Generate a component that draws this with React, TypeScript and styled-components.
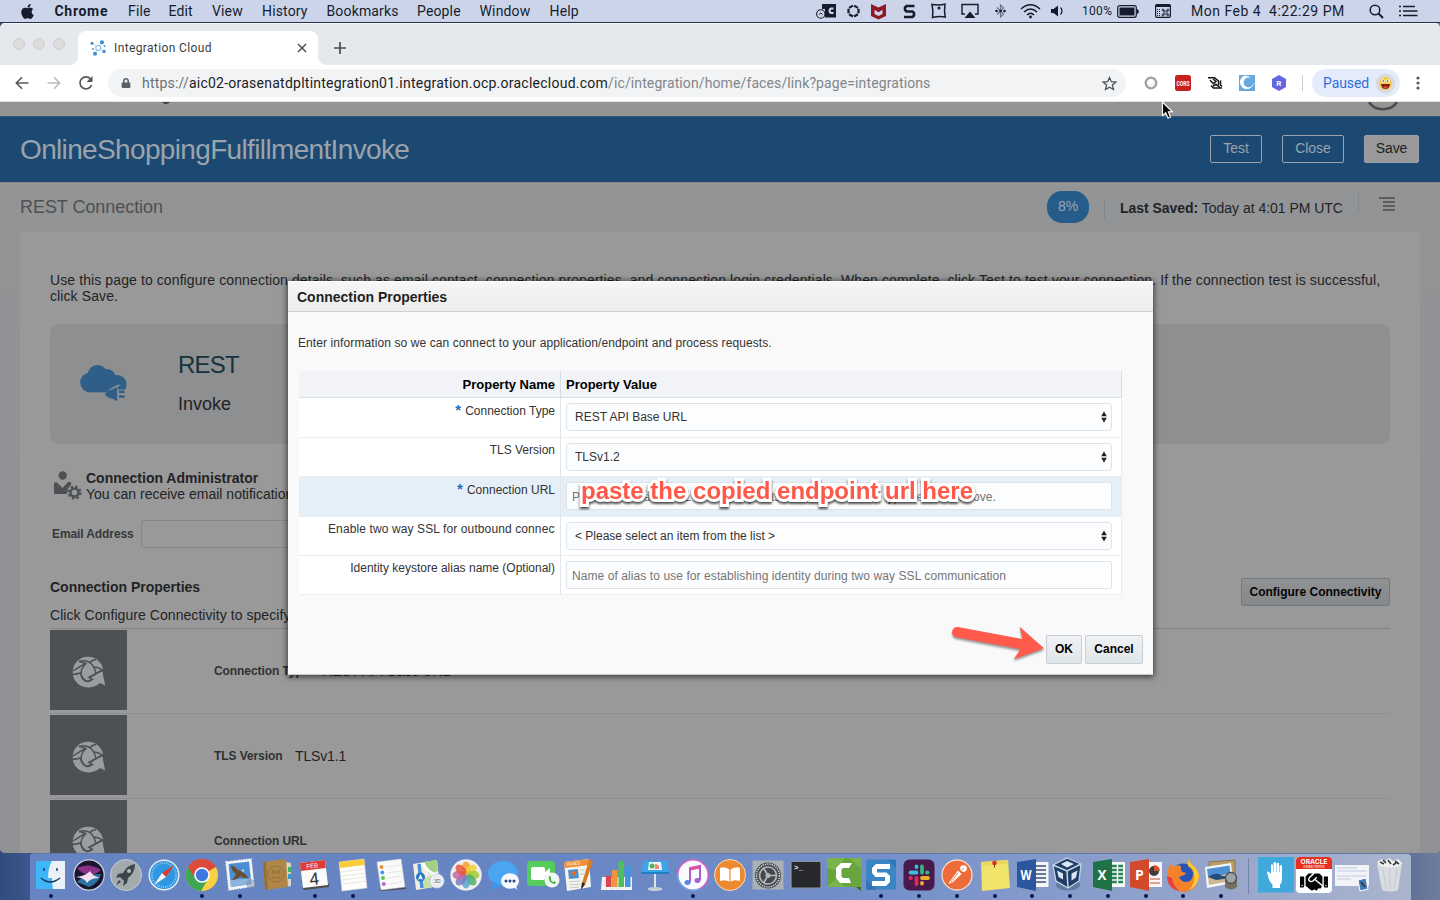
import React from "react";
import styled, { createGlobalStyle } from "styled-components";
import { FaApple, FaHandshake, FaLock } from "react-icons/fa";

const HELV = `"Liberation Sans", Arial, sans-serif`;
const SYS = `Roboto, "Liberation Sans", sans-serif`;

const GlobalStyle = createGlobalStyle`
  * { box-sizing: border-box; }
  html, body { margin: 0; padding: 0; overflow: hidden; }
  button, input { font: inherit; }
  svg { display: block; flex: none; }
`;

const Desktop = styled.div`
  width: 1440px;
  height: 900px;
  display: flex;
  flex-direction: column;
  overflow: hidden;
  position: relative;
  background: linear-gradient(90deg, #334b7c 0, #3f5b92 40px, #5b6d98 1400px, #707d9b 1440px);
  font-family: ${HELV};
`;

/* ---------- menu bar ---------- */

const MenuBar = styled.div`
  height: 23px;
  flex: none;
  display: flex;
  align-items: center;
  background: #cbd4e9;
  border-bottom: 1px solid #28314d;
  color: #161c2e;
  font-family: ${SYS};
  font-size: 14px;
  letter-spacing: 0.15px;
`;

const MenuItem = styled.span<{ $w: number; $bold?: boolean; $ls?: number }>`
  width: ${(p) => p.$w}px;
  flex: none;
  white-space: nowrap;
  font-weight: ${(p) => (p.$bold ? 700 : 400)};
  letter-spacing: ${(p) => p.$ls ?? 0.15}px;
`;

const StatusItem = styled.span<{ $gap: number; $w: number; $size?: number; $ls?: number }>`
  margin-left: ${(p) => p.$gap}px;
  width: ${(p) => p.$w}px;
  flex: none;
  white-space: pre;
  font-size: ${(p) => p.$size ?? 14}px;
  letter-spacing: ${(p) => p.$ls ?? 0.15}px;
`;

const AppleLogo = styled(FaApple)`
  margin-left: 19px;
`;

/* ---------- browser window ---------- */

const Window = styled.div`
  height: 830px;
  flex: none;
  display: flex;
  flex-direction: column;
  overflow: hidden;
  border-radius: 5px;
  background: #999;
`;

const TabStrip = styled.div`
  height: 42px;
  flex: none;
  display: flex;
  align-items: flex-end;
  background: #e5e9ed;
  border-top: 1px solid #f4f5f6;
`;

const Lights = styled.div`
  width: 70px;
  height: 41px;
  padding: 14px 0 0 13px;
  display: flex;
  gap: 8px;
`;

const Light = styled.i`
  width: 12px;
  height: 12px;
  border-radius: 50%;
  background: #dcdcdc;
  border: 1px solid #cfcfcf;
`;

const TabFoot = styled.i<{ $right?: boolean }>`
  width: 8px;
  height: 8px;
  background: radial-gradient(circle at ${(p) => (p.$right ? "100%" : "0")} 0, transparent 7.5px, #fff 8px);
`;

const Tab = styled.div`
  width: 240px;
  height: 34px;
  padding: 0 10px 0 12px;
  display: flex;
  align-items: center;
  background: #fff;
  border-radius: 8px 8px 0 0;
  font: 12px ${SYS};
  letter-spacing: 0.37px;
  color: #3c4043;
`;

const TabTitle = styled.span`
  margin-left: 8px;
  flex: 1;
`;

const NewTab = styled.div`
  margin: 0 0 11px 7px;
`;

const Toolbar = styled.div`
  height: 37px;
  flex: none;
  display: flex;
  align-items: center;
  background: #fff;
  border-bottom: 1px solid #e3e3e3;
  padding-left: 14px;
`;

const NavIcons = styled.div`
  width: 94px;
  display: flex;
  gap: 16px;
`;

const Omnibox = styled.div`
  width: 1018px;
  height: 28px;
  border-radius: 14px;
  background: #f1f3f4;
  display: flex;
  align-items: center;
  padding: 0 9px 0 13px;
  font: 14px ${SYS};
  letter-spacing: 0.11px;
  color: #80868b;
`;

const Url = styled.span`
  margin-left: 11px;
  flex: 1;
  white-space: nowrap;
`;

const Host = styled.span`
  color: #202124;
  letter-spacing: 0.245px;
`;

const Scheme = styled.span`
  color: #6b7075;
  letter-spacing: 0.19px;
`;

const Extensions = styled.div`
  width: 176px;
  padding-left: 17px;
  display: flex;
  align-items: center;
  gap: 16px;
`;

const Divider = styled.i<{ $h: number; $color: string }>`
  width: 1px;
  height: ${(p) => p.$h}px;
  flex: none;
  background: ${(p) => p.$color};
`;

const Profile = styled.div`
  margin-left: 9px;
  width: 88px;
  height: 28px;
  flex: none;
  border-radius: 14px;
  background: #e4ecfb;
  color: #2f6fdc;
  font: 14px ${SYS};
  letter-spacing: -0.1px;
  display: flex;
  align-items: center;
  justify-content: space-between;
  padding: 0 4px 0 11px;
`;

const KebabSlot = styled.div`
  margin-left: 16px;
`;

/* ---------- page content ---------- */

const Page = styled.main`
  flex: 1;
  display: flex;
  flex-direction: column;
  background: linear-gradient(#939495 80px, #8f9195 400px);
  color: #222325;
`;

const TopStrip = styled.div`
  height: 14px;
  flex: none;
  background: #949494;
  display: flex;
  justify-content: space-between;
  padding: 0 41px 0 160px;
`;

const TitleBar = styled.header`
  height: 66px;
  flex: none;
  display: flex;
  align-items: center;
  gap: 20px;
  padding: 0 21px 0 20px;
  background: #1c4972;
  border-top: 1px solid #315a80;
`;

const Title = styled.h1`
  flex: 1;
  margin: 0;
  font-weight: 400;
  font-size: 28px;
  letter-spacing: -0.65px;
  color: #9ba3aa;
`;

const HeaderButton = styled.button<{ $w: number; $filled?: boolean }>`
  width: ${(p) => p.$w}px;
  height: 28px;
  margin-top: -2px;
  padding: 0 0 2px;
  border-radius: 2px;
  border: 1px solid #98a3ad;
  background: ${(p) => (p.$filled ? "#999" : "transparent")};
  color: ${(p) => (p.$filled ? "#222" : "#9aa5ae")};
  font-size: 14px;
  letter-spacing: -0.05px;
`;

const SubHeader = styled.div`
  height: 50px;
  flex: none;
  display: flex;
  padding: 0 45px 0 20px;
  border-top: 1px solid #87898b;
`;

const SubTitle = styled.h2`
  flex: 1;
  margin: 14px 0 0;
  font-weight: 400;
  font-size: 18px;
  line-height: 20px;
  letter-spacing: -0.05px;
  color: #4f5050;
`;

const Percent = styled.span`
  width: 42px;
  height: 32px;
  margin: 8px 15px 0 0;
  border-radius: 15px;
  background: #265c8a;
  color: #98a6b1;
  font-size: 14px;
  line-height: 31px;
  text-align: center;
`;

const Saved = styled.span`
  margin: 16px 15px 0 15px;
  width: 223px;
  font-size: 14px;
  line-height: 18px;
  white-space: nowrap;
  letter-spacing: -0.03px;
`;

const DividerDrop = styled.div<{ $top: number }>`
  padding-top: ${(p) => p.$top}px;
`;

const ListIcon = styled.div`
  margin: 14px 0 0 20px;
  width: 16px;
  height: 15px;
  display: flex;
  flex-direction: column;
  align-items: flex-end;
  gap: 2px;
`;

const ListLine = styled.i<{ $w: number }>`
  width: ${(p) => p.$w}px;
  height: 2px;
  background: #5c5d5e;
`;

const Card = styled.section`
  flex: 1;
  margin: 0 20px;
  padding: 40px 30px 0;
  background: #999;
  overflow: hidden;
`;

const Intro = styled.p`
  margin: 0;
  font-size: 14px;
  line-height: 16px;
  letter-spacing: 0.1px;
`;

const Connector = styled.div`
  margin-top: 20px;
  height: 120px;
  border-radius: 9px;
  background: #8d8f91;
  display: flex;
  padding: 28px 0 0 29px;
`;

const CloudSlot = styled.div`
  padding-top: 12px;
`;

const ConnectorText = styled.div`
  margin-left: 51px;
`;

const ConnectorName = styled.div`
  font-size: 24px;
  line-height: 26px;
  letter-spacing: -0.8px;
  color: #16323c;
`;

const ConnectorRole = styled.div`
  margin-top: 15px;
  font-size: 18px;
  line-height: 22px;
`;

const Admin = styled.div`
  margin-top: 26px;
  display: flex;
  gap: 4px;
  padding-left: 4px;
  font-size: 14px;
  line-height: 16px;
`;

const EmailRow = styled.label`
  margin-top: 18px;
  display: flex;
  align-items: center;
  gap: 7px;
  padding-left: 2px;
  font-size: 12px;
  font-weight: 700;
  letter-spacing: -0.1px;
  color: #37383a;
`;

const EmailInput = styled.input`
  width: 300px;
  height: 28px;
  border: 1px solid #84888c;
  border-radius: 2px;
  background: #999;
`;

const SectionHead = styled.div`
  margin-top: 30px;
  height: 51px;
  display: flex;
  justify-content: space-between;
  border-bottom: 1px solid #7f8487;
`;

const SectionTitle = styled.h3`
  margin: 0 0 10px;
  font-size: 14px;
  line-height: 18px;
`;

const SectionHint = styled.div`
  font-size: 14px;
  line-height: 18px;
  letter-spacing: 0.06px;
`;

const PushButton = styled.button<{ $w: number; $dim?: boolean }>`
  width: ${(p) => p.$w}px;
  height: ${(p) => (p.$dim ? 28 : 29)}px;
  padding: 0 0 1px;
  font-size: 12px;
  font-weight: 700;
  letter-spacing: 0;
  color: ${(p) => (p.$dim ? "#050505" : "#000")};
  border: 1px solid ${(p) => (p.$dim ? "#74797d" : "#c4ced7")};
  border-radius: 2px;
  background: ${(p) => (p.$dim ? "linear-gradient(#8f9193, #86898b)" : "linear-gradient(#f0f2f4, #e0e5e9)")};
`;

const PropRow = styled.div`
  height: 85px;
  display: flex;
  align-items: center;
  border-bottom: 1px solid #8e8f90;
`;

const PropTile = styled.div`
  width: 77px;
  height: 80px;
  margin-bottom: 2px;
  padding: 5px 0 0 1px;
  background: #4d5156;
  display: flex;
  align-items: center;
  justify-content: center;
`;

const PropLabel = styled.b`
  margin-left: 87px;
  font-size: 12px;
  letter-spacing: -0.08px;
  color: #303133;
`;

const PropValue = styled.span<{ $gap: number }>`
  margin-left: ${(p) => p.$gap}px;
  font-size: 14px;
  letter-spacing: -0.15px;
`;

/* ---------- dialog ---------- */

const Dialog = styled.div`
  position: absolute;
  left: 288px;
  top: 281px;
  width: 865px;
  height: 394px;
  display: flex;
  flex-direction: column;
  background: #f9f9f9;
  border-bottom: 1px solid #c0cbd4;
  box-shadow: 0 1px 6px 1px rgba(0, 0, 0, 0.6);
  color: #333;
  font-size: 12px;
`;

const DialogTitle = styled.div`
  height: 31px;
  flex: none;
  padding: 0 9px 0 9px;
  font-weight: 700;
  font-size: 14px;
  line-height: 30px;
  color: #1f1f1f;
  background: linear-gradient(#f6f6f6, #ededed);
  border-top: 1px solid #fff;
  border-bottom: 1px solid #c9d3da;
`;

const DialogText = styled.p`
  margin: 23px 0 0 10px;
  line-height: 16px;
  letter-spacing: 0.095px;
`;

const Table = styled.div`
  width: 823px;
  margin: 20px 0 0 11px;
  display: flex;
  flex-direction: column;
`;

const HeadRow = styled.div`
  height: 27px;
  display: grid;
  grid-template-columns: 262px 1fr;
  background: #f2f3f7;
  border-bottom: 1px solid #d6dfe6;
  border-right: 1px solid #d6dfe6;
  font-weight: 700;
  font-size: 13px;
  line-height: 27px;
  color: #000;
`;

const HeadName = styled.div`
  text-align: right;
  padding-right: 5px;
  border-right: 1px solid #d6dfe6;
`;

const HeadValue = styled.div`
  padding-left: 5px;
`;

const Row = styled.div<{ $h: number; $selected?: boolean }>`
  height: ${(p) => p.$h}px;
  display: grid;
  grid-template-columns: 262px 1fr;
  background: ${(p) => (p.$selected ? "#e5eff8" : "#fff")};
  border-bottom: 1px solid #ebeef0;
  border-right: 1px solid #e8ecef;
`;

const NameCell = styled.div<{ $top?: number }>`
  padding: ${(p) => p.$top ?? 4}px 5px 0 29px;
  text-align: right;
  line-height: 16px;
  white-space: nowrap;
  border-right: 1px solid #e2e7eb;
`;

const Clip = styled.div`
  width: 227px;
  overflow: hidden;
  text-align: left;
  letter-spacing: 0.11px;
`;

const Star = styled.b`
  color: #2a6cc4;
  font-size: 15px;
  line-height: 10px;
  margin-right: 4px;
`;

const ValueCell = styled.div`
  padding: 5px 0 0 5px;
`;

const SelectBox = styled.div`
  width: 546px;
  height: 28px;
  border: 1px solid #dde3e8;
  border-radius: 4px;
  background: #fcfdfe;
  display: flex;
  align-items: center;
  justify-content: space-between;
  padding: 0 3px 0 8px;
`;

const TextInput = styled.input`
  display: block;
  width: 546px;
  height: 28px;
  border: 1px solid #dde3e8;
  border-radius: 2px;
  background: #fcfdfe;
  padding: 1px 5px 0;
  letter-spacing: 0.08px;
  &::placeholder { color: #757575; opacity: 1; }
`;

const DialogActions = styled.div`
  margin: 40px 10px 0 0;
  display: flex;
  justify-content: flex-end;
  gap: 3px;
`;

const Note = styled.div`
  position: absolute;
  left: 581px;
  top: 477px;
  font-size: 24px;
  line-height: 28px;
  font-weight: 700;
  white-space: nowrap;
  color: #ff5848;
  -webkit-text-stroke: 6px #fff;
  paint-order: stroke fill;
  filter: drop-shadow(0 2px 1px rgba(0, 0, 0, 0.7));
`;

const ArrowMark = styled.svg`
  position: absolute;
  left: 946px;
  top: 620px;
  filter: drop-shadow(0 2px 1px rgba(0, 0, 0, 0.4));
`;

const Pointer = styled.svg`
  position: absolute;
  left: 1160px;
  top: 100px;
`;

/* ---------- dock ---------- */

const DockBar = styled.div`
  margin-left: 30px;
  width: 1381px;
  height: 47px;
  flex: none;
  display: flex;
  padding: 2px 0 0 2px;
  border-radius: 4px 4px 0 0;
  background: linear-gradient(90deg, #6684c2 0, #6785c3 500px, #7490ca 850px, #98a6cb 1200px, #aab4ce 100%);
  border-top: 1px solid #6279a8;
`;

const DockSlot = styled.div`
  width: 37.75px;
  flex: none;
  display: flex;
  flex-direction: column;
  align-items: center;
`;

const RunDot = styled.i`
  width: 4px;
  height: 4px;
  border-radius: 50%;
  background: #0a1750;
`;

const DockSeparator = styled.div`
  width: 17.5px;
  display: flex;
  justify-content: center;
  padding-top: 2px;
`;

/* ---------- icon drawings ---------- */

const INK = "#161c2e";

const Globe = () => (
  <svg width="34" height="34" viewBox="0 0 34 34">
    <circle cx="16" cy="16" r="15.3" fill="#9a9c9f" />
    <g fill="none" stroke="#4d5156" strokeWidth="1.5">
      <path d="M7 5.500Q13 3.500 18 6.500Q20 4 24 3.500" />
      <path d="M14 7.500Q9 12 9 18Q10 23 15 25.500Q20 24 22 20" />
      <path d="M18 6.500Q23 11 24 18" />
      <path d="M1 15Q7 11 13.500 7.500Q10 6 7 5.500" />
      <path d="M22 11Q26 11 30.500 14L17 21.500" />
    </g>
    <path d="M0 18.500Q5 18 8.500 17Q10 25 16 25.500Q19 25 21 23L17 21.500L31 14L33 29.500L28 27" fill="none" stroke="#4d5156" strokeWidth="1.500" />
    <path d="M30.300 15.500L33.200 29.500L28 27Q22 32 15 31.300Q4 30 1 20L6.500 19Q9 26.500 15.500 27Q20 27 23 24L19 21.700Z" fill="#9a9c9f" />
  </svg>
);

const CloudPlug = () => (
  <svg width="48" height="38" viewBox="0 0 48 38">
    <g fill="#2f5f89">
      <circle cx="11" cy="18.500" r="9.800" />
      <circle cx="18.500" cy="11" r="10" />
      <circle cx="28" cy="14" r="9" />
      <circle cx="38.500" cy="20" r="9" />
      <rect x="11" y="14" width="27" height="14.300" />
    </g>
    <path d="M24 31L31 25L39 20.500L50 25V38H24Z" fill="#8d8f91" />
    <path d="M39 22H47.300Q47 26 44 28H39Z" fill="#2f5f89" />
    <path d="M26 30.300Q27 27 33 25.500L38.200 23V37.300L33 34.500Q28 34 26 30.300Z" fill="#2f5f89" />
    <path d="M38.500 27.700H48M38.500 32.500H48" stroke="#8d8f91" strokeWidth="4.200" />
    <path d="M40 27.700H45.500M40 32.500H45.500" stroke="#2f5f89" strokeWidth="2.600" />
  </svg>
);

const AdminIcon = () => (
  <svg width="28" height="30" viewBox="0 0 28 30">
    <circle cx="8.700" cy="5.500" r="4.200" fill="#4d5156" />
    <path d="M0 24V14Q0 12 2.500 12L8.500 18L14 12H17V15Q13 18 13 24Z" fill="#4d5156" />
    <circle cx="20.500" cy="22.500" r="4" fill="none" stroke="#4d5156" strokeWidth="2.500" />
    <circle cx="20.500" cy="22.500" r="5.800" fill="none" stroke="#4d5156" strokeWidth="2.600" strokeDasharray="2.300 2.255" />
  </svg>
);

const Updown = () => (
  <svg width="8" height="12" viewBox="0 0 8 12">
    <path d="M1.200 5.200L4 0.500L6.800 5.200ZM1.200 6.800L4 11.500L6.800 6.800Z" fill="#222" />
  </svg>
);

const statusIcons: { x: number; w: number; node: React.ReactNode }[] = [
  {
    x: 816, w: 21,
    node: (
      <svg width="21" height="18" viewBox="0 0 21 18">
        <path d="M6 2H20V15.500H9V7H6Z" fill={INK} />
        <path d="M17.500 6.500H15A2.500 2.500 0 0 0 15 11H17.500" fill="none" stroke="#cbd4e9" strokeWidth="2.200" />
        <circle cx="4.800" cy="12" r="4.200" fill="#cbd4e9" stroke={INK} strokeWidth="1.100" />
        <path d="M3 12.500L4.800 11L6.600 12.500" stroke={INK} fill="none" />
      </svg>
    ),
  },
  {
    x: 846, w: 15,
    node: (
      <svg width="15" height="16" viewBox="0 0 15 16">
        <path d="M7.500 2.300L12.500 5.200V10.900L7.500 13.800L2.500 10.900V5.200Z" fill="none" stroke={INK} strokeWidth="2.200" strokeDasharray="4.400 1.350" strokeDashoffset="-0.700" />
      </svg>
    ),
  },
  {
    x: 871, w: 15,
    node: (
      <svg width="15" height="17" viewBox="0 0 15 17">
        <path d="M0 1L7.500 4.500L15 1V13L7.500 16.500L0 13Z" fill="#8e1826" />
        <path d="M3.500 6.500L7.500 9L11.500 6.500V11L7.500 13L3.500 11Z" fill="#cbd4e9" />
        <path d="M3.500 5.500L7.500 8L11.500 5.500" stroke="#8e1826" strokeWidth="2" fill="none" />
      </svg>
    ),
  },
  {
    x: 903, w: 13,
    node: (
      <svg width="13" height="15" viewBox="0 0 13 15">
        <path d="M11.500 2H3.500L2 3.500V6L3.500 7.500H9.500L11 9V11.500L9.500 13H1" fill="none" stroke={INK} strokeWidth="2.600" />
      </svg>
    ),
  },
  {
    x: 931, w: 16,
    node: (
      <svg width="16" height="16" viewBox="0 0 16 16">
        <path d="M1 1.500Q8 2.500 14 1.200Q13 8 14.200 14Q8 13 1.500 14.500Q2.500 8 1 1.500Z" fill="none" stroke={INK} strokeWidth="1.500" />
        <circle cx="8" cy="5" r="1.500" fill={INK} />
      </svg>
    ),
  },
  {
    x: 961, w: 18,
    node: (
      <svg width="18" height="16" viewBox="0 0 18 16">
        <path d="M4 11H1V1.500H17V11H14" fill="none" stroke={INK} strokeWidth="1.400" />
        <path d="M3.500 15L9 8.500L14.500 15Z" fill={INK} />
      </svg>
    ),
  },
  {
    x: 994, w: 13,
    node: (
      <svg width="13" height="16" viewBox="0 0 13 16">
        <path d="M3 4.500L9.500 11L6.500 14V2L9.500 5L3 11.500" fill="none" stroke="#6c7489" strokeWidth="1.200" />
        <circle cx="2.500" cy="8" r="1.300" fill={INK} />
        <circle cx="6.500" cy="8" r="1.300" fill={INK} />
        <circle cx="10.500" cy="8" r="1.300" fill={INK} />
      </svg>
    ),
  },
  {
    x: 1020, w: 21,
    node: (
      <svg width="21" height="16" viewBox="0 0 21 16">
        <g fill="none" stroke={INK} strokeWidth="1.500">
          <path d="M1 6Q10.500 -2.500 20 6" />
          <path d="M4 9Q10.500 3 17 9" />
          <path d="M7 12Q10.500 8.500 14 12" />
        </g>
        <circle cx="10.500" cy="14" r="1.400" fill={INK} />
      </svg>
    ),
  },
  {
    x: 1050, w: 14,
    node: (
      <svg width="14" height="14" viewBox="0 0 14 14">
        <path d="M1 5H3.500L8 1.500V12.500L3.500 9H1Z" fill={INK} />
        <path d="M10.500 3.500Q13.500 7 10.500 10.500" fill="none" stroke={INK} strokeWidth="1.200" />
      </svg>
    ),
  },
];

const BatteryIcon = () => (
  <svg width="23" height="13" viewBox="0 0 23 13">
    <rect x="0.700" y="0.700" width="18.600" height="11.600" rx="2" fill="none" stroke={INK} strokeWidth="1.200" />
    <rect x="2.500" y="2.500" width="15" height="8" fill={INK} />
    <path d="M20.500 4.500Q22.500 6.500 20.500 8.500Z" fill={INK} stroke={INK} />
  </svg>
);

const KeyboardIcon = () => (
  <svg width="16" height="14" viewBox="0 0 16 14">
    <rect x="0.600" y="0.600" width="14.800" height="12.800" rx="1.200" fill="none" stroke={INK} strokeWidth="1.200" />
    <path d="M1 2H15" stroke={INK} strokeWidth="2" />
    <path d="M2.500 5V12M4.500 5V12" stroke={INK} strokeDasharray="1 1" />
    <g fill="none" stroke={INK} strokeWidth="0.900">
      <rect x="9" y="7" width="3" height="3" />
      <circle cx="8" cy="6" r="1" /><circle cx="13" cy="6" r="1" />
      <circle cx="8" cy="11" r="1" /><circle cx="13" cy="11" r="1" />
    </g>
  </svg>
);

const SpotlightIcon = () => (
  <svg width="15" height="15" viewBox="0 0 15 15">
    <circle cx="6" cy="6" r="4.800" fill="none" stroke={INK} strokeWidth="1.500" />
    <path d="M9.500 9.500L14 14" stroke={INK} strokeWidth="1.900" />
  </svg>
);

const MenuListIcon = () => (
  <svg width="19" height="12" viewBox="0 0 19 12">
    <path d="M0 1.500H2M0 6H2M0 10.500H2" stroke={INK} strokeWidth="1.700" />
    <path d="M4 1.500H16M4 6H18.500M4 10.500H18.500" stroke={INK} strokeWidth="1.700" />
  </svg>
);

const Favicon = () => (
  <svg width="16" height="16" viewBox="0 0 16 16">
    <path d="M2 3L8 8L12 2M8 8L5 14M8 8L14 11" fill="none" stroke="#9cc6e8" strokeWidth="0.800" />
    <circle cx="8.300" cy="8" r="2.600" fill="#fff" stroke="#72b0e0" />
    <g fill="#3b8fd2">
      <circle cx="2" cy="3.200" r="1.500" /><circle cx="12" cy="2.300" r="2" />
      <circle cx="5" cy="13.800" r="2" /><circle cx="14" cy="11.500" r="1.700" />
      <circle cx="14.500" cy="6" r="0.900" /><circle cx="3" cy="9" r="0.900" />
    </g>
  </svg>
);

/* Every dock drawing is made on a 38 x 38 grid. */
const D = ({ children }: { children: React.ReactNode }) => (
  <svg width="38" height="38" viewBox="0 0 38 38">{children}</svg>
);

const petals = ["#f6a02d", "#f3d02f", "#a6c83c", "#4fae66", "#5ba7c9", "#7d7bc0", "#c267a4", "#e8573f"];

const dockApps: { run?: boolean; art: React.ReactNode }[] = [
  { art: (<>
    <rect x="4" y="5" width="29" height="28" rx="1.500" fill="#3fb6f7" />
    <path d="M20 5H33V33H21Q20 28 20 22H16Q16 12 20 5Z" fill="#eaf1f8" />
    <path d="M12 12V15M25 12V15" stroke="#16335a" strokeWidth="1.400" />
    <path d="M9 22Q18 30 28 22" fill="none" stroke="#16335a" strokeWidth="1.400" />
  </>), run: true },
  { art: (<>
    <circle cx="19" cy="19" r="15.200" fill="#1b1630" stroke="#cfd4e4" strokeWidth="1.200" />
    <path d="M7 12Q19 6 31 14Q24 20 19 19Q12 18 7 12Z" fill="#a63a9c" opacity=".8" />
    <path d="M7 26Q15 18 31 18Q28 28 19 31Z" fill="#2c7fae" opacity=".9" />
    <path d="M6 21Q16 20 20 15Q22 20 30 22Q20 22 17 27Q15 22 6 21Z" fill="#f2dff4" />
  </>) },
  { art: (<>
    <circle cx="19" cy="19" r="15.500" fill="#a3abaf" stroke="#c3cbd2" />
    <path d="M28 8Q20 9 16 17L11 18L9 22L13 21L17 25L16 30L20 27L21 22Q28 17 28 8Z" fill="#3f464b" />
    <circle cx="22" cy="15" r="2" fill="#b6bdc1" />
    <path d="M12 24L9 29L14 26Z" fill="#3f464b" />
  </>) },
  { art: (<>
    <circle cx="19" cy="19" r="15.500" fill="#e6ebf0" />
    <circle cx="19" cy="19" r="14" fill="#2f97e0" />
    <circle cx="19" cy="19" r="12" fill="none" stroke="#a6d5f5" strokeWidth="2" strokeDasharray=".7 1.400" />
    <path d="M29 9L21 21L17 17Z" fill="#e5382d" /><path d="M9 29L17 17L21 21Z" fill="#f4f4f4" />
  </>) },
  { run: true, art: (<>
    <circle cx="19" cy="19" r="16" fill="#f9d043" />
    <path d="M19 19L5.100 11A16 16 0 0 1 32.900 11Z" fill="#dd4b3c" />
    <path d="M19 19L5.100 11A16 16 0 0 0 18 35L25.500 22Z" fill="#3fa654" />
    <path d="M19 11H32.900A16 16 0 0 0 5.100 11L12 22Z" fill="#dd4b3c" />
    <circle cx="19" cy="19" r="7.800" fill="#fff" /><circle cx="19" cy="19" r="6.200" fill="#3c79e0" />
  </>) },
  { run: true, art: (<>
    <path d="M5 6L30 3L33 30L8 34Z" fill="#f5f6f7" stroke="#f5f6f7" strokeWidth="1.500" strokeDasharray="1.500 1" />
    <path d="M7.500 8L28 5.500L30.500 28L10 31Z" fill="#4c8ed3" />
    <path d="M9 24L30 22L30.500 28L10 31Z" fill="#8fb4dc" />
    <path d="M10 9Q15 11 17 14Q20 14 21 16Q25 18 28 23Q24 21 22 22L20 20Q15 24 11 24Q14 21 15 18Q10 15 10 9Z" fill="#6b4d30" />
    <path d="M20 14L23 13.500L22.500 16Z" fill="#f3efe6" />
    <circle cx="30" cy="28" r="5" fill="#6f87a5" opacity=".45" />
  </>) },
  { art: (<>
    <path d="M28 6L33 7V30L28 31Z" fill="#d8d5c4" /><path d="M30 11H33V16H30Z" fill="#39b56a" /><path d="M30 18H33V23H30Z" fill="#3b98d1" />
    <path d="M5 6L28 3L30 31L7 34Z" fill="#b18747" /><path d="M5 6L8 5.600L10 33.500L7 34Z" fill="#94703a" />
    <circle cx="18" cy="18" r="8" fill="none" stroke="#94703a" />
    <circle cx="15.500" cy="16" r="2.300" fill="#9c773c" /><circle cx="20.500" cy="16" r="2.300" fill="#9c773c" />
    <path d="M12 22.500Q15 18 18 22Q21 18 24 22.500Z" fill="#9c773c" />
  </>) },
  { run: true, art: (<>
    <path d="M6 31L33 28V31L8 34Z" fill="#4e4e4a" />
    <path d="M4 7L29 4L32 29L7 32Z" fill="#fbfbfb" /><path d="M4 7L29 4L29.800 12L4.800 15Z" fill="#e03c36" />
    <text x="10.500" y="12.500" fontSize="6" fill="#fff" fontFamily="Liberation Sans, sans-serif" transform="rotate(-6 10 12)">FEB</text>
    <text x="14" y="29" fontSize="17" fill="#333" fontFamily="Roboto, sans-serif" transform="rotate(-6 16 28)">4</text>
  </>) },
  { run: true, art: (<>
    <path d="M5 6L30 3L33 32L8 35Z" fill="#fdfdf9" stroke="#d8d8d8" strokeWidth=".5" /><path d="M5 6L30 3L30.700 9L5.700 12Z" fill="#f9ce3a" />
    <path d="M7 16L31 13M7.500 20L31.500 17M8 24L32 21M8.500 28L32.500 25" stroke="#dcdcdc" strokeWidth=".7" />
  </>) },
  { art: (<>
    <path d="M7 33L33 30L34 33L9 35Z" fill="#494b50" />
    <path d="M5 6L29 3L33 31L9 34Z" fill="#fafafa" stroke="#cfcfcf" strokeWidth=".5" />
    <circle cx="9.500" cy="11" r="2" fill="#f08a35" /><circle cx="10.300" cy="16.500" r="2" fill="#4a9be8" />
    <circle cx="11" cy="22" r="2" fill="#5fc34d" /><circle cx="11.800" cy="28" r="2" fill="#b36bd0" />
    <path d="M14 11L28 9M15 17L29 15M16 22L30 20M16 28L30 26" stroke="#ddd" strokeWidth=".7" />
  </>) },
  { art: (<>
    <path d="M4 8L28 4L31 30L7 34Z" fill="#f3efe0" />
    <path d="M14 6L28 4L29 15L20 18Z" fill="#a5d083" /><path d="M15 22L22 19L24 31L14 32.500Z" fill="#c5dfa8" />
    <path d="M14 7Q18 17 30 20" stroke="#fff" strokeWidth="3" fill="none" />
    <path d="M10 8L13 32" stroke="#4a8fd8" strokeWidth="3.500" />
    <circle cx="11.500" cy="21" r="4.500" fill="#2979cc" /><path d="M11.500 18L14 24L11.500 22.500L9 24Z" fill="#fff" />
    <circle cx="28" cy="25" r="7" fill="#f5f6f7" stroke="#c6ccd6" /><circle cx="28" cy="25" r="4.500" fill="none" stroke="#c6ccd6" strokeWidth=".6" />
    <text x="25" y="27.200" fontSize="5" fill="#555" fontFamily="Liberation Sans, sans-serif">3D</text>
  </>) },
  { art: (<>
    <circle cx="19" cy="19" r="15.700" fill="#efefed" />
    {petals.map((c, i) => (
      <ellipse key={c} cx="19" cy="12" rx="4.300" ry="6.500" fill={c} opacity=".85" transform={`rotate(${i * 45} 19 19)`} />
    ))}
  </>) },
  { art: (<>
    <ellipse cx="18" cy="17.500" rx="15" ry="12.500" fill="#4ba5f3" /><path d="M8 25Q9 31 5 33Q12 33 16 29Z" fill="#3c96ee" />
    <ellipse cx="25" cy="25" rx="9" ry="7.700" fill="#f6f9fd" /><path d="M29 31L32 34L31 28Z" fill="#f6f9fd" />
    <circle cx="21" cy="25" r="1.500" fill="#23498a" /><circle cx="25" cy="25" r="1.500" fill="#23498a" /><circle cx="29" cy="25" r="1.500" fill="#23498a" />
  </>) },
  { art: (<>
    <rect x="4" y="5" width="28" height="25" rx="4" fill="#56cd5b" />
    <rect x="8" y="11" width="14" height="13" rx="2" fill="#fff" /><path d="M22 16L27 12V23L22 20Z" fill="#fff" />
    <circle cx="29" cy="24" r="7.500" fill="#f5f7f6" />
    <path d="M26 20Q25 24 28 26.500Q31 29 33 27L31.500 25L30 26Q27.500 24.500 28 22.500L27.500 20Z" fill="#41bc4b" />
  </>) },
  { art: (<>
    <path d="M4 6L29 3L31 31L7 35Z" fill="#f6f4ef" /><path d="M4 6L29 3L29.600 9L4.600 12Z" fill="#ef9038" />
    <text x="7" y="9.800" fontSize="4" fill="#fff" fontFamily="Liberation Sans, sans-serif" transform="rotate(-7 7 10)">PAGES</text>
    <path d="M8 14L18 13L19 22L9 23Z" fill="#4893d0" /><path d="M10 16L17 15L14.500 20.500Z" fill="#e56b2c" />
    <path d="M9 26L20 25M9.500 29L20 28M10 32L19 31M20 14H25M20 18H24" stroke="#b8b8b8" strokeWidth=".8" />
    <path d="M29 4L33 5L25 29L21 33L22 27Z" fill="#d57d26" /><path d="M22 26L25 28L21 34Z" fill="#302a26" />
  </>) },
  { art: (<>
    <path d="M4 21H34V34H3Z" fill="#f4f4f6" /><path d="M4 25H34M4 29H34M8 21V34M14 21V34M20 21V34" stroke="#cfcfd6" strokeWidth=".5" />
    <rect x="8" y="20" width="5.500" height="11" fill="#dd4250" /><rect x="14" y="14" width="5.500" height="17" fill="#f0953a" />
    <rect x="20.500" y="5" width="5.500" height="26" fill="#4fbf5d" /><rect x="27" y="10" width="5.500" height="21" fill="#3f96e0" />
  </>) },
  { art: (<>
    <path d="M8 5H31L33 16H5Z" fill="#3aa5e8" /><path d="M5 16H33V18H5Z" fill="#1f7fc5" />
    <path d="M13 6H25L26 14H12Z" fill="#f1f5f8" /><circle cx="16" cy="10" r="2.500" fill="#5bb05a" /><path d="M20 13V8M22 13V9" stroke="#e55642" strokeWidth="1.300" />
    <path d="M18 18H20V31H18Z" fill="#dfe5ec" /><ellipse cx="19" cy="33" rx="7.500" ry="2" fill="#c5cdd8" />
  </>) },
  { run: true, art: (<>
    <circle cx="19" cy="19" r="15.200" fill="#fafafc" stroke="#d661c8" strokeWidth="1.400" />
    <path d="M3.800 19A15.200 15.200 0 0 0 25 33" fill="none" stroke="#5cb3ef" strokeWidth="1.400" />
    <path d="M16 26V12L26 10V24" fill="none" stroke="#a65fd8" strokeWidth="2" /><path d="M16 13L26 11" stroke="#e0529a" strokeWidth="3" />
    <ellipse cx="13.500" cy="26.500" rx="3" ry="2.500" fill="#5b83e5" /><ellipse cx="23.500" cy="24.500" rx="3" ry="2.500" fill="#a65fd8" />
  </>) },
  { art: (<>
    <circle cx="19" cy="19" r="15.500" fill="#ee8a2e" stroke="#f6ddc0" />
    <path d="M19 14Q14 10 9 12V25Q15 23 19 26Q23 23 29 25V12Q24 10 19 14Z" fill="#fff" /><path d="M19 14V26" stroke="#ee8a2e" strokeWidth="1.200" />
  </>) },
  { art: (<>
    <rect x="3.500" y="4.500" width="31" height="29" fill="#a9b0b6" />
    <circle cx="19" cy="19.500" r="13" fill="#43484c" /><circle cx="19" cy="19.500" r="11.500" fill="none" stroke="#d6d9dc" strokeWidth="1.500" strokeDasharray="1.300 1" />
    <circle cx="19" cy="19.500" r="8.500" fill="none" stroke="#b3b7ba" strokeWidth="1.700" />
    <path d="M19 19.500H28M19 19.500L14.500 12M19 19.500L14.500 27" stroke="#b3b7ba" strokeWidth="1.700" /><circle cx="19" cy="19.500" r="2.500" fill="#b3b7ba" />
  </>) },
  { art: (<>
    <rect x="4" y="5.500" width="30" height="26.500" rx="1" fill="#27282b" stroke="#8f949c" strokeWidth="1.200" />
    <text x="7" y="14" fontSize="7.500" fontWeight="700" fill="#f0f0f0" fontFamily="Liberation Mono, monospace">&gt;_</text>
  </>) },
  { art: (<>
    <path d="M2 2H36V35L31 31H2Z" fill="#3a6d22" /><rect x="2" y="2" width="34" height="29" fill="#69a53e" />
    <path d="M2 2H20L10 14L2 12ZM24 2L36 12V2ZM2 31L12 22L20 31Z" fill="#8cc35a" opacity=".5" />
    <path d="M27 7H16L11 12V22L15 27H26L24 22H18L16.500 20.500V13.500L18 12H24Z" fill="#fff" />
  </>) },
  { run: true, art: (<>
    <rect x="4" y="3.500" width="30" height="30" rx="2" fill="#3a86c5" /><path d="M4 24L15 34H4ZM26 4L34 12V4Z" fill="#2a6ca8" opacity=".6" />
    <path d="M28 8H14L10 12V17L13.500 21H23V25H10V30H24L28 26V20L24.500 16.500H15V13H28Z" fill="#fff" />
  </>) },
  { run: true, art: (<>
    <rect x="3.500" y="3.500" width="31" height="31" rx="6" fill="#48194a" />
    <g strokeLinecap="round" strokeWidth="3.800">
      <path d="M16.500 10.500V11M10.500 16.500H16.500" stroke="#3dbbe0" />
      <path d="M22 10.500V16.500M27.500 16.500H27" stroke="#36b37c" />
      <path d="M22 22H28M22 27.500V27" stroke="#e8b02e" />
      <path d="M16.500 22V28M10.500 22H11" stroke="#dc2a5d" />
    </g>
  </>) },
  { run: true, art: (<>
    <circle cx="19" cy="19" r="15" fill="#ee6c3a" stroke="#f7dccd" strokeWidth="1.300" />
    <path d="M10 28L20 14.500L23.500 18L15 26Z" fill="#fff" /><circle cx="25.500" cy="12.500" r="3.300" fill="#fff" /><path d="M22 16L26 12" stroke="#ee6c3a" strokeWidth=".8" />
    <path d="M20 17L13 26" stroke="#ee6c3a" strokeWidth=".8" />
  </>) },
  { run: true, art: (<>
    <path d="M5 6L32 4L34 32L6 35Z" fill="#f2e36b" /><path d="M5 6L32 4L32.300 8L5 10Z" fill="#e9d95c" />
    <circle cx="18.500" cy="7" r="2.300" fill="#d92f28" /><path d="M18.500 9V11.500" stroke="#8c2c22" />
  </>) },
  { run: true, art: (<>
    <path d="M18 6H35.500V31H18Z" fill="#f5f6f8" /><path d="M22 10H33M22 14H33M22 18H33M22 22H33M22 26H33" stroke="#3b4f78" strokeWidth="1.300" />
    <path d="M4 6L23 3V35L4 31Z" fill="#2b579f" />
    <text x="7.500" y="24" fontSize="14" fontWeight="700" fill="#fff" fontFamily="Open Sans, sans-serif" textLength="11" lengthAdjust="spacingAndGlyphs">W</text>
  </>) },
  { run: true, art: (<>
    <ellipse cx="17" cy="29" rx="12" ry="5.500" fill="#5f7ba2" />
    <path d="M16 2L30 8L28 25L17 32L5 25L2 9Z" fill="#1f3d66" stroke="#c9d6e6" strokeWidth="1.200" />
    <path d="M2 9L16 15L30 8M16 15L17 32" stroke="#c9d6e6" strokeWidth="1.500" fill="none" />
    <path d="M6 14.500L12 17.500V23.500L7.500 21ZM20.500 17.500L26.500 14.500L25 21.500L20.500 24.500ZM10 8L16 5L23 8L16 11.500Z" fill="#dbe6f2" />
  </>) },
  { run: true, art: (<>
    <path d="M18 6H36V31H18Z" fill="#f5f8f5" /><path d="M23 10H34M23 14H34M23 18H34M23 22H34M23 26H34" stroke="#2c8156" strokeWidth="2.500" /><path d="M28.500 7V30" stroke="#f5f8f5" strokeWidth="1.500" />
    <path d="M4 6L23 3V35L4 31Z" fill="#1f7245" />
    <text x="8.500" y="24" fontSize="15" fontWeight="700" fill="#fff" fontFamily="Open Sans, sans-serif" textLength="9" lengthAdjust="spacingAndGlyphs">X</text>
  </>) },
  { run: true, art: (<>
    <path d="M18 6H35V31H18Z" fill="#f8f5f4" /><circle cx="27" cy="15" r="5" fill="#3d3d3d" /><path d="M27 15V9A6 6 0 0 1 33 15Z" fill="#d5512f" /><path d="M23 23H33M23 27H33" stroke="#d5876f" strokeWidth="1.500" />
    <path d="M3 6L22 3V35L3 31Z" fill="#d24a2b" />
    <text x="8" y="24" fontSize="14" fontWeight="700" fill="#fff" fontFamily="Open Sans, sans-serif">P</text>
  </>) },
  { run: true, art: (<>
    <circle cx="19" cy="20" r="12.500" fill="#2456b8" />
    <path d="M24 3Q27 9 31 11Q35 16 35 21Q33 35 19 36Q4 34 3 20Q3 12 8 7Q8 10 10 11Q13 8 17 10Q16 13 18 16Q22 16 22 18Q18 20 15 21Q17 26 22 26Q29 25 29 18Q29 13 24 10Z" fill="#f5822a" />
    <path d="M24 3Q27 9 31 11Q35 16 35 21Q33 31 25 34Q32 26 30 17Q29 12 24 10Z" fill="#fcc934" />
    <path d="M3 20Q3 32 16 35.500Q9 30 8 22Z" fill="#e63f3d" />
  </>) },
  { run: true, art: (<>
    <path d="M7 6L33 4V24L8 28Z" fill="#b99c66" stroke="#8a744a" />
    <path d="M3 11L29 7L31 27L5 32Z" fill="#f4f7fa" /><path d="M5 13L27.500 9.500L28.500 18L6 21Z" fill="#4d8fd0" /><path d="M6 21L28.500 18L29 25L7 29Z" fill="#cdb991" />
    <path d="M6 21Q16 15 20 20Q26 20 29 22L14 24Z" fill="#254b7b" />
    <path d="M23 24H35V31Q29 36 23 31Z" fill="#77705f" /><circle cx="29" cy="22" r="5.500" fill="#9da4a6" stroke="#4b4e50" strokeWidth="1.300" />
  </>) },
];

const dockRight: React.ReactNode[] = [
  <>
    <rect x="1" y="1" width="36" height="35.500" fill="#40a9dc" />
    <path d="M11 19Q9 17 10.500 15.500Q12 15 14 18V9Q14.500 7.500 16 9V16H16.500V7Q17.500 5 19 7V16H19.500V7.500Q20.700 6 22 7.500V16.500H22.500V10Q24 8 25 10V24Q25 27 23 28.500V32H15.500V28.500Q11.500 25 11 19Z" fill="#fff" />
  </>,
  <>
    <rect x="1" y="1" width="36" height="36" rx="4" fill="#fff" />
    <path d="M1 13V5Q1 1 5 1H33Q37 1 37 5V13Z" fill="#e7301f" />
    <text x="5.500" y="7.500" fontSize="6" fontWeight="700" fill="#fff" fontFamily="Inter, sans-serif" textLength="27" lengthAdjust="spacingAndGlyphs">ORACLE</text>
    <text x="8.500" y="12" fontSize="4" fill="#fff" fontFamily="Inter, sans-serif" textLength="21" lengthAdjust="spacingAndGlyphs">EMM/Terms</text>
    <FaHandshake x={5} y={12} size={28} color="#050505" />
  </>,
  <>
    <rect x="2" y="9" width="34" height="21" fill="#f1f3f8" />
    <path d="M4 12H24M4 15H34M4 20H34M4 23H18" stroke="#c3cbe2" strokeWidth="1" />
    <path d="M25 24L33 22L35 33L27 35Z" fill="#3f7dc2" stroke="#fff" /><path d="M28 26L32 31" stroke="#463827" strokeWidth="2" />
  </>,
  <>
    <path d="M6 8L31 7L27 34Q19 37 11 34Z" fill="#dde0e3" opacity=".93" />
    <path d="M6 6L11 3L14 5L18 2L22 5L27 3L31 7Q28 12 18 11Q8 11 6 6Z" fill="#f1f1ef" />
    <path d="M9 6L13 8M17 4L20 8M24 5L28 8M12 4L15 7M22 9L25 7" stroke="#34383b" strokeWidth="1.600" />
    <path d="M12 13L15 33M26 13L23 33M19 12V34" stroke="#c0c4c9" strokeWidth=".8" />
  </>,
];

/* ---------- assembly ---------- */

const menus: [string, number, boolean?, number?][] = [
  ["Chrome", 73.5, true, 0.7],
  ["File", 40.5],
  ["Edit", 43.5],
  ["View", 50],
  ["History", 64.5],
  ["Bookmarks", 90.5],
  ["People", 62.5],
  ["Window", 70],
  ["Help", 267],
];

const SystemMenu = () => (
  <MenuBar>
    <MenuItem as="div" $w={54.5}>
      <AppleLogo size={17} />
    </MenuItem>
    {menus.map(([label, w, bold, ls]) => (
      <MenuItem key={label} $w={w} $bold={bold} $ls={ls}>{label}</MenuItem>
    ))}
    {statusIcons.map((s, i) => {
      const prevEnd = i === 0 ? 816.5 : statusIcons[i - 1].x + statusIcons[i - 1].w;
      return <StatusItem key={s.x} $gap={s.x - prevEnd} $w={s.w}>{s.node}</StatusItem>;
    })}
    <StatusItem $gap={18} $w={31} $size={12} $ls={0.3}>100%</StatusItem>
    <StatusItem $gap={4} $w={23}><BatteryIcon /></StatusItem>
    <StatusItem $gap={15} $w={16}><KeyboardIcon /></StatusItem>
    <StatusItem $gap={20} $w={155} $ls={0.5}>{"Mon Feb 4  4:22:29 PM"}</StatusItem>
    <StatusItem $gap={23} $w={15}><SpotlightIcon /></StatusItem>
    <StatusItem $gap={15} $w={19}><MenuListIcon /></StatusItem>
  </MenuBar>
);

const BrowserChrome = () => (
  <>
    <TabStrip>
      <Lights><Light /><Light /><Light /></Lights>
      <TabFoot />
      <Tab>
        <Favicon />
        <TabTitle>Integration Cloud</TabTitle>
        <svg width="12" height="12" viewBox="0 0 12 12"><path d="M2 2L10 10M10 2L2 10" stroke="#4a4e52" strokeWidth="1.500" /></svg>
      </Tab>
      <TabFoot $right />
      <NewTab>
        <svg width="14" height="12" viewBox="0 0 14 12"><path d="M1 6H13M7 0V12" stroke="#4a4e52" strokeWidth="1.700" /></svg>
      </NewTab>
    </TabStrip>
    <Toolbar>
      <NavIcons>
        <svg width="16" height="16" viewBox="0 0 16 16"><path d="M14.500 8H2.500M8 2.300L2.300 8L8 13.700" fill="none" stroke="#54585c" strokeWidth="1.600" /></svg>
        <svg width="16" height="16" viewBox="0 0 16 16"><path d="M1.500 8H13.500M8 2.300L13.700 8L8 13.700" fill="none" stroke="#b9bbbe" strokeWidth="1.600" /></svg>
        <svg width="16" height="16" viewBox="0 0 16 16"><path d="M13.600 10A6 6 0 1 1 12.600 4" fill="none" stroke="#54585c" strokeWidth="1.700" /><path d="M14.500 1V7H8.500Z" fill="#54585c" /></svg>
      </NavIcons>
      <Omnibox>
        <FaLock size={10} color="#5c6064" />
        <Url>
          <Scheme>https://</Scheme><Host>aic02-orasenatdpltintegration01.integration.ocp.oraclecloud.com</Host>/ic/integration/home/faces/link?page=integrations
        </Url>
        <svg width="15" height="15" viewBox="0 0 15 15"><path d="M7.500 1.500L9.300 5.700L13.900 6.100L10.400 9.100L11.500 13.500L7.500 11.200L3.500 13.500L4.600 9.100L1.100 6.100L5.700 5.700Z" fill="none" stroke="#4f5357" strokeWidth="1.300" /></svg>
      </Omnibox>
      <Extensions>
        <svg width="16" height="16" viewBox="0 0 16 16"><circle cx="8" cy="8" r="5.300" fill="#f4f4f4" stroke="#a0a0a0" strokeWidth="2.300" /><circle cx="7" cy="7" r="2.500" fill="#fff" /></svg>
        <svg width="16" height="16" viewBox="0 0 16 16"><rect width="16" height="16" rx="2.500" fill="#c8201c" /><text x="1.500" y="11" fontSize="8" fontWeight="700" fill="#fff" fontFamily="Roboto, sans-serif" textLength="13" lengthAdjust="spacingAndGlyphs">CORS</text></svg>
        <svg width="16" height="16" viewBox="0 0 16 16">
          <g fill="none" stroke="#151515" strokeWidth="1.500">
            <path d="M1 2.800H7.500L11.500 6V10.500" /><path d="M3 5.300L6.500 8.800L9 6.500L6 4" /><path d="M4 10.500L6.500 13H15M13.500 5.500V10L15 11.500" /><path d="M6 11L9 9.500L13 12.500" />
          </g>
        </svg>
        <svg width="16" height="16" viewBox="0 0 16 16"><rect width="16" height="16" fill="#66a9df" /><path d="M4.500 1A7 7 0 1 0 15 7Q13 13.500 7.500 12Q2.500 9 6 4Q9.500 1.500 13 3.500Q9 0 4.500 1Z" fill="#fff" /><circle cx="9.200" cy="7.800" r="3.700" fill="#66a9df" /></svg>
        <svg width="16" height="16" viewBox="0 0 16 16"><path d="M8 0L15 4V12L8 16L1 12V4Z" fill="#6366e0" /><text x="5.300" y="11" fontSize="8" fontWeight="700" fill="#fff" fontFamily="Roboto, sans-serif">R</text></svg>
      </Extensions>
      <Divider $h={16} $color="#c9ccd0" />
      <Profile>
        <span>Paused</span>
        <svg width="21" height="21" viewBox="0 0 21 21">
          <circle cx="10.500" cy="10.500" r="10" fill="#d9dbe0" /><circle cx="10.500" cy="10.500" r="6.500" fill="#f8c94a" />
          <circle cx="8" cy="8" r="1.700" fill="#fff" /><circle cx="13" cy="8" r="1.700" fill="#fff" /><circle cx="8.200" cy="8" r=".8" fill="#4b2f18" /><circle cx="12.800" cy="8" r=".8" fill="#4b2f18" />
          <path d="M6 11H15Q14.500 16 10.500 16Q6.500 16 6 11Z" fill="#7e2419" /><path d="M8 14Q10.500 12.500 13 14L10.500 16Z" fill="#e5484e" />
        </svg>
      </Profile>
      <KebabSlot>
        <svg width="4" height="14" viewBox="0 0 4 14"><circle cx="2" cy="2" r="1.600" fill="#54585c" /><circle cx="2" cy="7" r="1.600" fill="#54585c" /><circle cx="2" cy="12" r="1.600" fill="#54585c" /></svg>
      </KebabSlot>
    </Toolbar>
  </>
);

const Content = () => (
  <Page>
    <TopStrip>
      <svg width="12" height="4" viewBox="0 0 12 4"><path d="M3 0Q6 2.500 9 0" fill="none" stroke="#333" strokeWidth="1.500" /></svg>
      <svg width="32" height="10" viewBox="0 0 32 10"><path d="M2 0A16 14 0 0 0 30 0" fill="none" stroke="#4b4c4e" strokeWidth="2.600" /></svg>
    </TopStrip>
    <TitleBar>
      <Title>OnlineShoppingFulfillmentInvoke</Title>
      <HeaderButton $w={52}>Test</HeaderButton>
      <HeaderButton $w={62}>Close</HeaderButton>
      <HeaderButton $w={55} $filled>Save</HeaderButton>
    </TitleBar>
    <SubHeader>
      <SubTitle>REST Connection</SubTitle>
      <Percent>8%</Percent>
      <DividerDrop $top={17}><Divider as="div" $h={20} $color="#808890" /></DividerDrop>
      <Saved><b>Last Saved:</b> Today at 4:01 PM UTC</Saved>
      <DividerDrop $top={9}><Divider as="div" $h={20} $color="#808890" /></DividerDrop>
      <ListIcon><ListLine $w={16} /><ListLine $w={12} /><ListLine $w={12} /><ListLine $w={12} /></ListIcon>
    </SubHeader>
    <Card>
      <Intro>
        Use this page to configure connection details, such as email contact, connection properties, and connection login credentials. When complete, click Test to test your connection. If the connection test is successful, click Save.
      </Intro>
      <Connector>
        <CloudSlot><CloudPlug /></CloudSlot>
        <ConnectorText>
          <ConnectorName>REST</ConnectorName>
          <ConnectorRole>Invoke</ConnectorRole>
        </ConnectorText>
      </Connector>
      <Admin>
        <AdminIcon />
        <div>
          <b>Connection Administrator</b>
          <div>You can receive email notifications</div>
        </div>
      </Admin>
      <EmailRow>Email Address<EmailInput /></EmailRow>
      <SectionHead>
        <div>
          <SectionTitle>Connection Properties</SectionTitle>
          <SectionHint>Click Configure Connectivity to specify information</SectionHint>
        </div>
        <PushButton $w={149} $dim>Configure Connectivity</PushButton>
      </SectionHead>
      <PropRow><PropTile><Globe /></PropTile><PropLabel>Connection Type</PropLabel><PropValue $gap={13}>REST API Base URL</PropValue></PropRow>
      <PropRow><PropTile><Globe /></PropTile><PropLabel>TLS Version</PropLabel><PropValue $gap={12.5}>TLSv1.1</PropValue></PropRow>
      <PropRow><PropTile><Globe /></PropTile><PropLabel>Connection URL</PropLabel></PropRow>
    </Card>
  </Page>
);

const PropertiesDialog = () => (
  <Dialog role="dialog">
    <DialogTitle>Connection Properties</DialogTitle>
    <DialogText>Enter information so we can connect to your application/endpoint and process requests.</DialogText>
    <Table>
      <HeadRow><HeadName>Property Name</HeadName><HeadValue>Property Value</HeadValue></HeadRow>
      <Row $h={40}>
        <NameCell $top={5}><Star>*</Star>Connection Type</NameCell>
        <ValueCell><SelectBox>REST API Base URL<Updown /></SelectBox></ValueCell>
      </Row>
      <Row $h={39}>
        <NameCell>TLS Version</NameCell>
        <ValueCell><SelectBox>TLSv1.2<Updown /></SelectBox></ValueCell>
      </Row>
      <Row $h={40} $selected>
        <NameCell $top={5}><Star>*</Star>Connection URL</NameCell>
        <ValueCell><TextInput placeholder="Provide the base URL of the endpoints for the connection type selected above." /></ValueCell>
      </Row>
      <Row $h={39}>
        <NameCell><Clip>Enable two way SSL for outbound connections</Clip></NameCell>
        <ValueCell><SelectBox>&lt; Please select an item from the list &gt;<Updown /></SelectBox></ValueCell>
      </Row>
      <Row $h={39}>
        <NameCell>Identity keystore alias name (Optional)</NameCell>
        <ValueCell><TextInput placeholder="Name of alias to use for establishing identity during two way SSL communication" /></ValueCell>
      </Row>
    </Table>
    <DialogActions>
      <PushButton $w={36}>OK</PushButton>
      <PushButton $w={58}>Cancel</PushButton>
    </DialogActions>
  </Dialog>
);

const Dock = () => (
  <DockBar>
    {dockApps.map((app, i) => (
      <DockSlot key={i}><D>{app.art}</D>{app.run && <RunDot />}</DockSlot>
    ))}
    <DockSeparator><Divider $h={36} $color="#7684a8" /></DockSeparator>
    {dockRight.map((art, i) => (
      <DockSlot key={i}><D>{art}</D></DockSlot>
    ))}
  </DockBar>
);

export default function App() {
  return (
    <Desktop>
      <GlobalStyle />
      <SystemMenu />
      <Window>
        <BrowserChrome />
        <Content />
      </Window>
      <Dock />
      <PropertiesDialog />
      <Note>paste the copied endpoint url here</Note>
      <ArrowMark width="102" height="46" viewBox="0 0 102 46">
        <path d="M12 7L76.500 19L73.700 6.700L98 28.300L67.700 39.300L74.500 29.300L10.500 17.300A5.200 5.200 0 0 1 12 7Z" fill="#ff5a4b" />
      </ArrowMark>
      <Pointer width="14" height="20" viewBox="0 0 14 20">
        <path d="M2.500 2V15.500L5.700 12.700L8 18L10.500 17L8.300 11.800H12.300Z" fill="#000" stroke="#fff" strokeWidth="1.100" />
      </Pointer>
    </Desktop>
  );
}
